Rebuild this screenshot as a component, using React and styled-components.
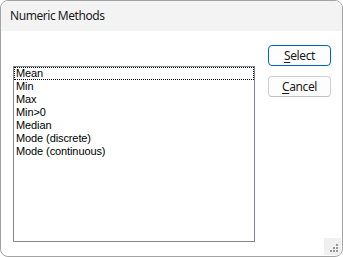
import React from 'react';
import styled, { createGlobalStyle } from 'styled-components';

const GlobalStyle = createGlobalStyle`
  html, body {
    margin: 0;
    padding: 0;
    background: #ffffff;
  }
  * {
    box-sizing: border-box;
  }
`;

const Window = styled.div`
  position: relative;
  width: 343px;
  height: 257px;
  border: 1px solid #a3a3a3;
  border-radius: 8px;
  overflow: hidden;
  background: #ffffff;
  display: flex;
  flex-direction: column;
  font-family: "Noto Sans", "Liberation Sans", sans-serif;
`;

const TitleBar = styled.div`
  height: 30px;
  flex: none;
  background: #f3f3f3;
  display: flex;
  align-items: center;
  padding: 0 0 1px 9px;
  font-size: 12px;
  letter-spacing: -0.45px;
  color: #1b1b1b;
`;

const Body = styled.div`
  flex: 1;
  display: flex;
  align-items: flex-start;
  padding: 14px 0 0 12px;
`;

const ListBox = styled.ul`
  list-style: none;
  margin: 21px 0 0 0;
  padding: 0;
  width: 242px;
  height: 176px;
  border: 1px solid #828790;
  background: #ffffff;
  font-family: "Liberation Sans", Arial, sans-serif;
  font-size: 11px;
  letter-spacing: -0.1px;
  color: #000000;
`;

const ListItem = styled.li`
  height: 13px;
  line-height: 11px;
  padding-left: 1px;
  border: 1px ${p => (p.focused ? 'dotted #000000' : 'solid transparent')};
  white-space: nowrap;
`;

const ButtonColumn = styled.div`
  display: flex;
  flex-direction: column;
  gap: 10px;
  margin-left: 13px;
`;

const Button = styled.button`
  width: 63px;
  height: 21px;
  padding: 0;
  border-radius: 4px;
  border: 1px solid ${p => (p.primary ? '#0067c0' : '#d0d0d0')};
  border-bottom-color: ${p => (p.primary ? '#0067c0' : '#c0c0c0')};
  background: #fdfdfd;
  font-family: "Noto Sans", "Liberation Sans", sans-serif;
  font-size: 12px;
  letter-spacing: -0.4px;
  color: #1b1b1b;
  line-height: 17px;
  cursor: default;

  u {
    text-decoration-thickness: 1px;
    text-underline-offset: 2px;
  }
`;

const Grip = styled.div`
  position: absolute;
  right: 1px;
  bottom: 1px;
  width: 17px;
  height: 17px;
  background: #f0f0f0;
  display: flex;
  align-items: flex-end;
  justify-content: flex-end;
`;

const methods = [
  'Mean',
  'Min',
  'Max',
  'Min>0',
  'Median',
  'Mode (discrete)',
  'Mode (continuous)',
];

export default function App() {
  return (
    <>
      <GlobalStyle />
      <Window>
        <TitleBar>Numeric Methods</TitleBar>
        <Body>
          <ListBox>
            {methods.map((m, i) => (
              <ListItem key={m} focused={i === 0}>
                {m}
              </ListItem>
            ))}
          </ListBox>
          <ButtonColumn>
            <Button primary>
              <u>S</u>elect
            </Button>
            <Button>
              <u>C</u>ancel
            </Button>
          </ButtonColumn>
        </Body>
        <Grip>
          <svg width="12" height="12" viewBox="0 0 12 12">
            <g fill="#9a9a9a">
              <rect x="7" y="1" width="2" height="2" />
              <rect x="4" y="4" width="2" height="2" />
              <rect x="7" y="4" width="2" height="2" />
              <rect x="1" y="7" width="2" height="2" />
              <rect x="4" y="7" width="2" height="2" />
              <rect x="7" y="7" width="2" height="2" />
            </g>
          </svg>
        </Grip>
      </Window>
    </>
  );
}
